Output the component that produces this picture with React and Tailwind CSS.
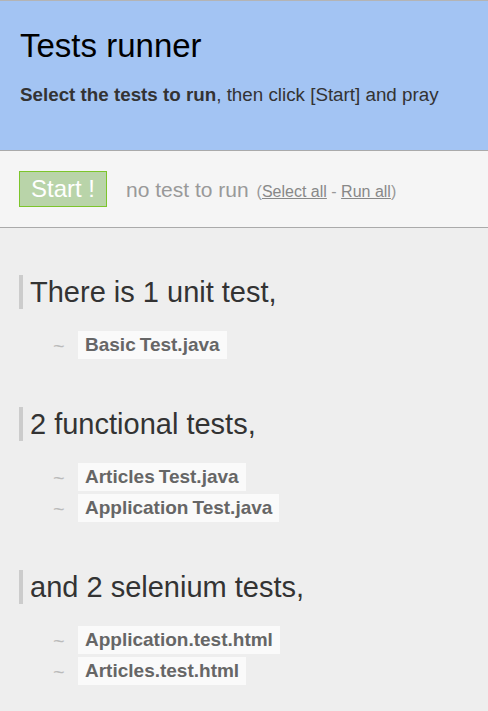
import React from 'react';

const groups = [
  { title: 'There is 1 unit test,', tests: ['BasicTest.java'] },
  { title: '2 functional tests,', tests: ['ArticlesTest.java', 'ApplicationTest.java'] },
  { title: 'and 2 selenium tests,', tests: ['Application.test.html', 'Articles.test.html'] },
];

function TestName({ name }) {
  const parts = name.split(/(?=Test\.java$)/);
  return (
    <>
      {parts[0]}
      {parts[1] && <span className="ml-[4px]">{parts[1]}</span>}
    </>
  );
}

export default function App() {
  return (
    <div className="min-h-screen bg-[#eeeeee] font-['Liberation_Sans',Arial,sans-serif] border-t border-[#b4b4b4]">
      <header className="h-[149px] bg-[#a3c4f3] px-5 pt-[26px]">
        <h1 className="text-[33px] leading-[38px] text-black">Tests runner</h1>
        <p className="mt-[18px] text-[18.8px] leading-[24px] text-[#333]">
          <strong>Select the tests to run</strong>, then click [Start] and pray
        </p>
      </header>

      <div className="bg-[#f5f5f5] border-y border-[#aaaaaa] px-[19px] py-5 flex items-baseline">
        <button className="h-9 px-[11px] border border-[#7cc52b] bg-[#b9d4a9] text-white text-[24px] leading-[34px]">
          Start !
        </button>
        <span className="ml-[19px] text-[21px] text-[#999]">no test to run</span>
        <span className="ml-[8px] text-[16px] text-[#999]">
          (<a href="#" className="underline text-[#888]">Select all</a> - <a href="#" className="underline text-[#888]">Run all</a>)
        </span>
      </div>

      <main className="px-[19px] pt-[47px] pb-6">
        {groups.map((g, i) => (
          <section key={i} className={i ? 'mt-[48px]' : ''}>
            <h2 className="border-l-4 border-[#cccccc] pl-[7px] text-[29px] leading-[34px] text-[#333]">{g.title}</h2>
            <ul className="mt-[22px] flex flex-col gap-[3px]">
              {g.tests.map(t => (
                <li key={t} className="flex items-center h-7">
                  <span className="ml-[34px] w-[25px] text-[20px] leading-7 pt-[2px] text-[#bbbbbb]">~</span>
                  <span className="h-7 px-[7px] bg-[#fafafa] text-[19px] leading-7 font-bold text-[#666]">
                    <TestName name={t} />
                  </span>
                </li>
              ))}
            </ul>
          </section>
        ))}
      </main>
    </div>
  );
}
